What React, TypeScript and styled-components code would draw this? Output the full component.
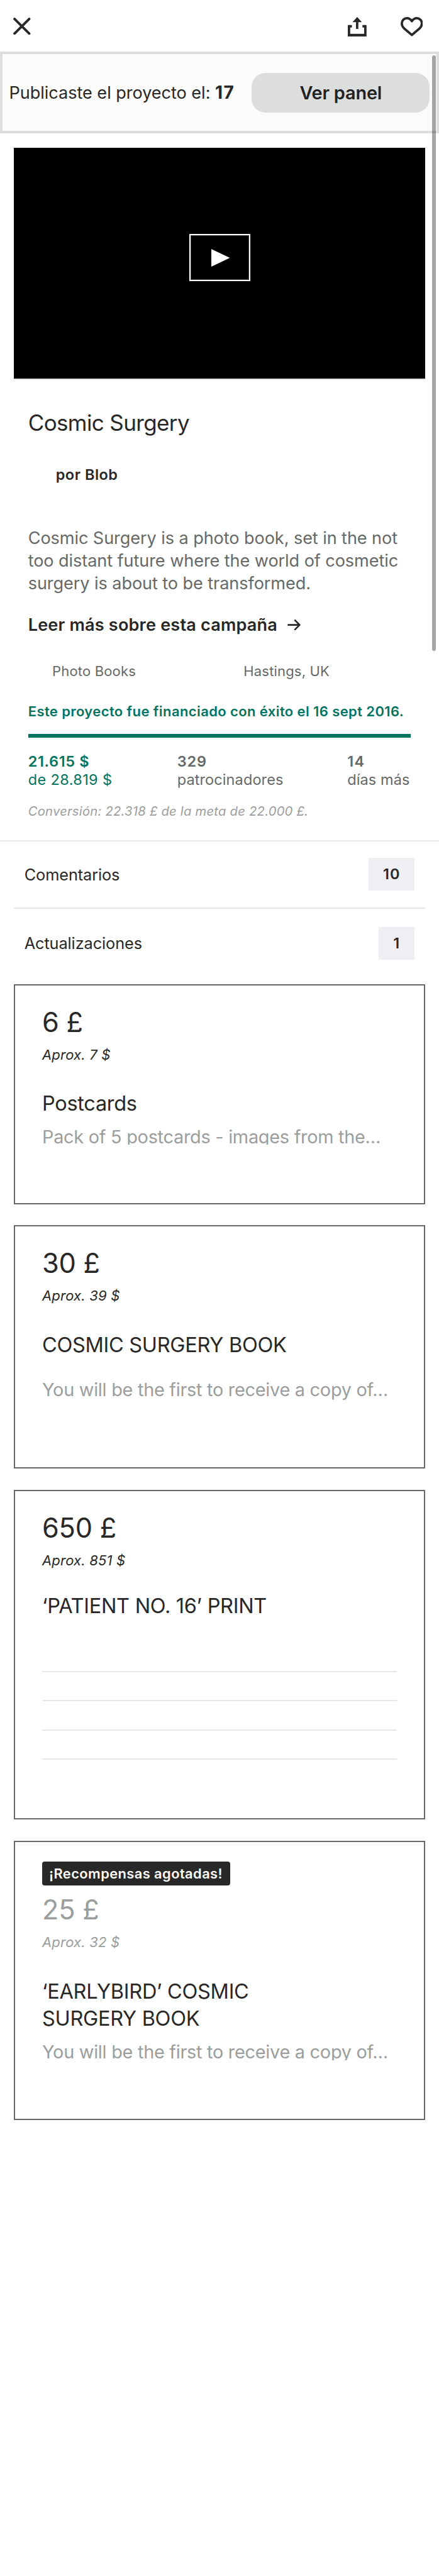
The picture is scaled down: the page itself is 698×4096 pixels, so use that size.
import React from 'react';
import styled, { createGlobalStyle, css } from 'styled-components';

const color = {
  ink: '#282828',
  support: '#656969',
  muted: '#9b9e9e',
  green: '#037362',
  rule: '#e6e6e6',
  panel: '#dcdedd',
};

const GlobalStyle = createGlobalStyle`
  * { box-sizing: border-box; }
  body { margin: 0; background: #fff; }
  h1, h2, h3, p { margin: 0; font-weight: 400; }
  button { border: 0; padding: 0; background: none; font: inherit; color: inherit; }
`;

const Page = styled.main`
  position: relative;
  width: 698px;
  height: 4096px;
  overflow: hidden;
  background: #fff;
  color: ${color.ink};
  font-family: Inter, 'Liberation Sans', sans-serif;
  white-space: nowrap;
`;

const ScrollThumb = styled.div`
  position: absolute;
  top: 87.5px;
  left: 687px;
  width: 5.6px;
  height: 947.5px;
  border-radius: 3px;
  background: rgba(0, 0, 0, 0.35);
`;

const Header = styled.header`
  display: flex;
  align-items: flex-start;
  height: 82px;
  padding: 26.6px 25.8px 0 21.4px;
`;

const IconButton = styled.button<{ $gap?: number; $drop?: number }>`
  display: block;
  margin-top: ${(p) => p.$drop ?? 0}px;
  margin-left: ${(p) => p.$gap ?? 0}px;
  svg { display: block; }
`;

const Spacer = styled.div`
  flex: 1;
`;

const Banner = styled.section`
  display: flex;
  align-items: center;
  justify-content: space-between;
  height: 130px;
  padding: 0 10.7px 0 10.5px;
  border: 4px solid ${color.panel};
  background: #fbfbfa;
`;

const BannerText = styled.p`
  font-size: 27.1px;
  letter-spacing: -0.04px;
  line-height: 36px;
  b { font-weight: 700; font-size: 28px; letter-spacing: 1.4px; }
`;

const PanelButton = styled.button`
  width: 283px;
  height: 63px;
  border-radius: 22px;
  background: ${color.panel};
  color: #222;
  font-size: 28.9px;
  font-weight: 600;
  letter-spacing: -0.18px;
`;

const Video = styled.div`
  display: flex;
  align-items: center;
  justify-content: center;
  height: 369.5px;
  margin: 22.6px 22.3px 0;
  padding-bottom: 17.7px;
  border-bottom: 2px solid ${color.rule};
  background: #000;
  background-clip: padding-box;
`;

const PlayButton = styled.button`
  display: flex;
  align-items: center;
  justify-content: center;
  width: 97px;
  height: 75px;
  padding-left: 3.6px;
  border: 2px solid #fff;
  box-shadow: inset 0 0 0 1px rgba(255, 255, 255, 0.25);
  svg { display: block; }
`;

const Summary = styled.section`
  padding: 0 44.7px;
`;

const Title = styled.h1`
  margin-top: 46.4px;
  font-size: 35px;
  line-height: 44px;
  letter-spacing: -0.62px;
`;

const Creator = styled.p`
  margin-top: 45.4px;
  padding-left: 44px;
  font-size: 23.5px;
  font-weight: 600;
  line-height: 30px;
  letter-spacing: 0.5px;
`;

const Blurb = styled.p`
  margin-top: 68.4px;
  color: ${color.support};
  font-size: 27.1px;
  line-height: 35.84px;
  letter-spacing: -0.08px;
`;

const ReadMore = styled.div`
  display: flex;
  align-items: center;
  margin-top: 29.9px;
  font-size: 27.1px;
  font-weight: 600;
  line-height: 36px;
  letter-spacing: 0.17px;
  svg { display: block; margin-left: 16.2px; }
`;

const Facts = styled.div`
  display: grid;
  grid-template-columns: 304.3px 304.3px;
  margin-top: 41.5px;
  color: ${color.support};
  font-size: 22px;
  line-height: 28px;
  letter-spacing: 0.18px;
  span { padding-left: 38.3px; }
`;

const FundedNote = styled.p`
  margin-top: 36.2px;
  color: ${color.green};
  font-size: 22px;
  font-weight: 600;
  line-height: 28px;
  letter-spacing: 0.4px;
`;

const Progress = styled.div`
  height: 5.6px;
  margin-top: 21.8px;
  background: ${color.green};
`;

const Stats = styled.div`
  display: grid;
  grid-template-columns: 237px 270.6px auto;
  margin-top: 22.8px;
`;

const Stat = styled.p<{ $green?: boolean; $spacing: number; $bold: number }>`
  display: flex;
  flex-direction: column;
  color: ${(p) => (p.$green ? color.green : color.support)};
  font-size: 23.5px;
  line-height: 29.4px;
  letter-spacing: ${(p) => p.$spacing}px;
  b { font-weight: 600; letter-spacing: ${(p) => p.$bold}px; }
`;

const Conversion = styled.p`
  margin-top: 22.5px;
  color: ${color.muted};
  font-size: 20.2px;
  font-style: italic;
  line-height: 26px;
  letter-spacing: 0.25px;
`;

const LinkList = styled.section`
  margin-top: 32.8px;
  border-top: 2px solid ${color.rule};
`;

const LinkRow = styled.div<{ $height: number; $ruled?: boolean }>`
  display: flex;
  align-items: center;
  justify-content: space-between;
  height: ${(p) => p.$height}px;
  margin: 0 22.3px;
  padding: 0 16.7px 0 16.4px;
  ${(p) => p.$ruled && css`border-bottom: 2px solid ${color.rule};`}
  font-size: 25.3px;
  letter-spacing: -0.09px;
`;

const Count = styled.span<{ $width: number }>`
  width: ${(p) => p.$width}px;
  height: 52px;
  background: #eeeef3;
  font-size: 23.5px;
  font-weight: 600;
  line-height: 52px;
  letter-spacing: 1px;
  text-align: center;
`;

const Rewards = styled.section`
  display: flex;
  flex-direction: column;
  gap: 33.5px;
  margin: 10.2px 22.3px 0;
`;

const RewardCard = styled.article<{ $height: number }>`
  height: ${(p) => p.$height}px;
  padding: 0 42.7px;
  border: 2px solid ${color.support};
`;

const SoldOutTag = styled.div`
  width: 299px;
  height: 38px;
  margin-top: 31.6px;
  padding-left: 11px;
  border-radius: 4px;
  background: ${color.ink};
  color: #fff;
  font-size: 21.9px;
  font-weight: 600;
  line-height: 38px;
  letter-spacing: 0.4px;
`;

const Price = styled.h2<{ $soldOut?: boolean }>`
  margin-top: ${(p) => (p.$soldOut ? 12.2 : 32.3)}px;
  color: ${(p) => (p.$soldOut ? color.muted : color.ink)};
  font-size: 43.3px;
  line-height: 52px;
  letter-spacing: -0.25px;
`;

const Approx = styled.p<{ $soldOut?: boolean }>`
  margin-top: 12px;
  color: ${(p) => (p.$soldOut ? color.muted : color.ink)};
  font-size: 22px;
  font-style: italic;
  line-height: 28px;
  letter-spacing: 0.2px;
`;

const RewardTitle = styled.h3<{ $top: number }>`
  width: 400px;
  margin-top: ${(p) => p.$top}px;
  font-size: 32.5px;
  line-height: 42.8px;
  letter-spacing: -0.3px;
`;

const RewardText = styled.p<{ $top: number; $clip?: number }>`
  height: ${(p) => p.$clip ?? 38}px;
  margin-top: ${(p) => p.$top}px;
  overflow: hidden;
  color: ${color.muted};
  font-size: 28.9px;
  line-height: 38px;
  letter-spacing: -0.28px;
`;

const ItemRules = styled.div`
  display: flex;
  flex-direction: column;
  gap: 44.5px;
  margin-top: 81px;
`;

const ItemRule = styled.div`
  height: 2px;
  background: ${color.rule};
`;

type Reward = {
  price: string;
  approx: string;
  title: string[];
  text?: string;
  height: number;
  titleTop: number;
  textTop?: number;
  clip?: number;
  rules?: number;
  soldOut?: boolean;
};

const rewards: Reward[] = [
  { price: '6 £', approx: 'Aprox. 7 $', title: ['Postcards'], text: 'Pack of 5 postcards - images from the…', height: 350, titleTop: 43.2, textTop: 12.3, clip: 31 },
  { price: '30 £', approx: 'Aprox. 39 $', title: ['COSMIC SURGERY BOOK'], text: 'You will be the first to receive a copy of…', height: 387.3, titleTop: 43.2, textTop: 31 },
  { price: '650 £', approx: 'Aprox. 851 $', title: ['‘PATIENT NO. 16’ PRINT'], height: 524.1, titleTop: 37.6, rules: 4 },
  { price: '25 £', approx: 'Aprox. 32 $', title: ['‘EARLYBIRD’ COSMIC', 'SURGERY BOOK'], text: 'You will be the first to receive a copy of…', height: 444, titleTop: 43.9, textTop: 12.3, clip: 31.5, soldOut: true },
];

const CloseIcon = () => (
  <svg width="27.6" height="27.6" viewBox="0 0 29.7 29.7" fill="none" stroke={color.ink} strokeWidth="4.2" strokeLinecap="round">
    <path d="M2.3 2.3 27.4 27.4M27.4 2.3 2.3 27.4" />
  </svg>
);

const ShareIcon = () => (
  <svg width="29.8" height="31.2" viewBox="0 0 32 33.5" fill={color.ink}>
    <path d="M0 13.6H7V18H4.1V28.6H27.9V18H25V13.6H32V33.4H0Z" />
    <path d="M16 0 24 8.8H18V20.4H14V8.8H8Z" />
  </svg>
);

const HeartIcon = () => (
  <svg width="35.7" height="31.1" viewBox="0 0 38.3 33.4" fill="none" stroke={color.ink} strokeWidth="4" strokeLinejoin="round">
    <path d="M19.15 7.2C16.6 3.6 13.9 2.1 10.9 2.1 5.8 2.1 2 6 2 11c0 3.3 1.3 5.9 4 8.6L19.15 30.8 32.3 19.6c2.7-2.7 4-5.3 4-8.6 0-5-3.8-8.9-8.9-8.9-3 0-5.7 1.5-8.25 5.1Z" />
  </svg>
);

const PlayIcon = () => (
  <svg width="29.5" height="28" viewBox="0 0 31.7 30" fill="#fff">
    <path d="M0 0 31.7 15 0 30Z" />
  </svg>
);

const ArrowIcon = () => (
  <svg width="21" height="17.3" viewBox="0 0 22.5 18.6" fill="none" stroke={color.ink} strokeWidth="2.9" strokeLinecap="round" strokeLinejoin="round">
    <path d="M1.5 9.3H20.8M13 1.5 20.8 9.3 13 17.1" />
  </svg>
);

export default function App() {
  return (
    <Page>
      <GlobalStyle />
      <Header>
        <IconButton aria-label="Cerrar" $drop={1.3}><CloseIcon /></IconButton>
        <Spacer />
        <IconButton aria-label="Compartir"><ShareIcon /></IconButton>
        <IconButton aria-label="Guardar" $gap={54}><HeartIcon /></IconButton>
      </Header>
      <Banner>
        <BannerText>Publicaste el proyecto el: <b>17</b></BannerText>
        <PanelButton>Ver panel</PanelButton>
      </Banner>
      <Video>
        <PlayButton aria-label="Reproducir"><PlayIcon /></PlayButton>
      </Video>
      <Summary>
        <Title>Cosmic Surgery</Title>
        <Creator>por Blob</Creator>
        <Blurb>
          Cosmic Surgery is a photo book, set in the not<br />
          too distant future where the world of cosmetic<br />
          surgery is about to be transformed.
        </Blurb>
        <ReadMore>Leer más sobre esta campaña<ArrowIcon /></ReadMore>
        <Facts>
          <span>Photo Books</span>
          <span>Hastings, UK</span>
        </Facts>
        <FundedNote>Este proyecto fue financiado con éxito el 16 sept 2016.</FundedNote>
        <Progress />
        <Stats>
          <Stat $green $spacing={0.38} $bold={0.65}><b>21.615 $</b>de 28.819 $</Stat>
          <Stat $spacing={0.11} $bold={0.9}><b>329</b>patrocinadores</Stat>
          <Stat $spacing={0.09} $bold={1.4}><b>14</b>días más</Stat>
        </Stats>
        <Conversion>Conversión: 22.318 £ de la meta de 22.000 £.</Conversion>
      </Summary>
      <LinkList>
        <LinkRow $height={107} $ruled>Comentarios<Count $width={72.6}>10</Count></LinkRow>
        <LinkRow $height={109.8}>Actualizaciones<Count $width={56.8}>1</Count></LinkRow>
      </LinkList>
      <Rewards>
        {rewards.map((r) => (
          <RewardCard key={r.price} $height={r.height}>
            {r.soldOut && <SoldOutTag>¡Recompensas agotadas!</SoldOutTag>}
            <Price $soldOut={r.soldOut}>{r.price}</Price>
            <Approx $soldOut={r.soldOut}>{r.approx}</Approx>
            <RewardTitle $top={r.titleTop}>
              {r.title.map((line) => <div key={line}>{line}</div>)}
            </RewardTitle>
            {r.text && <RewardText $top={r.textTop ?? 0} $clip={r.clip}>{r.text}</RewardText>}
            {r.rules && (
              <ItemRules>
                {Array.from({ length: r.rules }, (_, i) => <ItemRule key={i} />)}
              </ItemRules>
            )}
          </RewardCard>
        ))}
      </Rewards>
      <ScrollThumb />
    </Page>
  );
}
